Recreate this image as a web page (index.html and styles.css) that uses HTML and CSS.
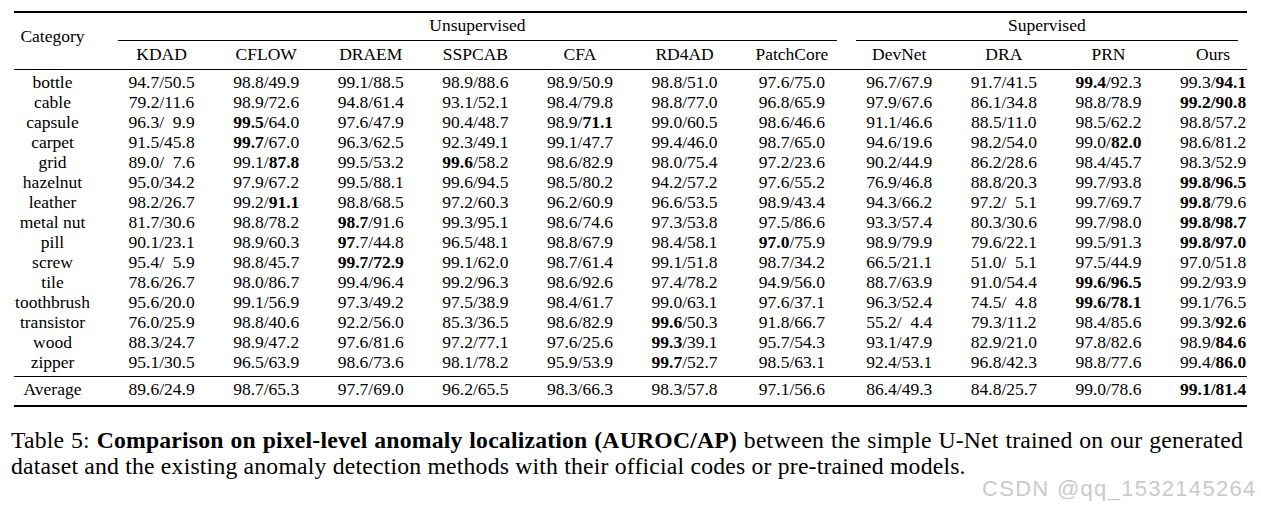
FILE: index.html
```html
<!DOCTYPE html>
<html>
<head>
<meta charset="utf-8">
<link rel="stylesheet" href="styles.css">
</head>
<body>
<table class="tbl">
<colgroup>
<col class="col-cat">
<col class="col-n"><col class="col-n"><col class="col-n"><col class="col-n"><col class="col-n"><col class="col-n">
<col class="col-pc">
<col class="col-n"><col class="col-n"><col class="col-n">
<col class="col-last">
</colgroup>
<thead>
<tr class="h1">
<th class="cat" rowspan="2">Category</th>
<th class="grp" colspan="7"><div class="grp-in grp-u">Unsupervised</div></th>
<th class="grp" colspan="4"><div class="grp-in grp-s">Supervised</div></th>
</tr>
<tr class="h2">
<th>KDAD</th><th>CFLOW</th><th>DRAEM</th><th>SSPCAB</th><th>CFA</th><th>RD4AD</th><th>PatchCore</th><th>DevNet</th><th>DRA</th><th>PRN</th><th class="last">Ours</th>
</tr>
</thead>
<tbody>
<tr class="first"><td>bottle</td><td>94.7/50.5</td><td>98.8/49.9</td><td>99.1/88.5</td><td>98.9/88.6</td><td>98.9/50.9</td><td>98.8/51.0</td><td>97.6/75.0</td><td>96.7/67.9</td><td>91.7/41.5</td><td><b>99.4</b>/92.3</td><td>99.3/<b>94.1</b></td></tr>
<tr><td>cable</td><td>79.2/11.6</td><td>98.9/72.6</td><td>94.8/61.4</td><td>93.1/52.1</td><td>98.4/79.8</td><td>98.8/77.0</td><td>96.8/65.9</td><td>97.9/67.6</td><td>86.1/34.8</td><td>98.8/78.9</td><td><b>99.2/90.8</b></td></tr>
<tr><td>capsule</td><td>96.3/<span class="ph">0</span>9.9</td><td><b>99.5</b>/64.0</td><td>97.6/47.9</td><td>90.4/48.7</td><td>98.9/<b>71.1</b></td><td>99.0/60.5</td><td>98.6/46.6</td><td>91.1/46.6</td><td>88.5/11.0</td><td>98.5/62.2</td><td>98.8/57.2</td></tr>
<tr><td>carpet</td><td>91.5/45.8</td><td><b>99.7</b>/67.0</td><td>96.3/62.5</td><td>92.3/49.1</td><td>99.1/47.7</td><td>99.4/46.0</td><td>98.7/65.0</td><td>94.6/19.6</td><td>98.2/54.0</td><td>99.0/<b>82.0</b></td><td>98.6/81.2</td></tr>
<tr><td>grid</td><td>89.0/<span class="ph">0</span>7.6</td><td>99.1/<b>87.8</b></td><td>99.5/53.2</td><td><b>99.6</b>/58.2</td><td>98.6/82.9</td><td>98.0/75.4</td><td>97.2/23.6</td><td>90.2/44.9</td><td>86.2/28.6</td><td>98.4/45.7</td><td>98.3/52.9</td></tr>
<tr><td>hazelnut</td><td>95.0/34.2</td><td>97.9/67.2</td><td>99.5/88.1</td><td>99.6/94.5</td><td>98.5/80.2</td><td>94.2/57.2</td><td>97.6/55.2</td><td>76.9/46.8</td><td>88.8/20.3</td><td>99.7/93.8</td><td><b>99.8/96.5</b></td></tr>
<tr><td>leather</td><td>98.2/26.7</td><td>99.2/<b>91.1</b></td><td>98.8/68.5</td><td>97.2/60.3</td><td>96.2/60.9</td><td>96.6/53.5</td><td>98.9/43.4</td><td>94.3/66.2</td><td>97.2/<span class="ph">0</span>5.1</td><td>99.7/69.7</td><td><b>99.8</b>/79.6</td></tr>
<tr><td>metal nut</td><td>81.7/30.6</td><td>98.8/78.2</td><td><b>98.7</b>/91.6</td><td>99.3/95.1</td><td>98.6/74.6</td><td>97.3/53.8</td><td>97.5/86.6</td><td>93.3/57.4</td><td>80.3/30.6</td><td>99.7/98.0</td><td><b>99.8/98.7</b></td></tr>
<tr><td>pill</td><td>90.1/23.1</td><td>98.9/60.3</td><td><b>97</b>.7/44.8</td><td>96.5/48.1</td><td>98.8/67.9</td><td>98.4/58.1</td><td><b>97.0</b>/75.9</td><td>98.9/79.9</td><td>79.6/22.1</td><td>99.5/91.3</td><td><b>99.8/97.0</b></td></tr>
<tr><td>screw</td><td>95.4/<span class="ph">0</span>5.9</td><td>98.8/45.7</td><td><b>99.7/72.9</b></td><td>99.1/62.0</td><td>98.7/61.4</td><td>99.1/51.8</td><td>98.7/34.2</td><td>66.5/21.1</td><td>51.0/<span class="ph">0</span>5.1</td><td>97.5/44.9</td><td>97.0/51.8</td></tr>
<tr><td>tile</td><td>78.6/26.7</td><td>98.0/86.7</td><td>99.4/96.4</td><td>99.2/96.3</td><td>98.6/92.6</td><td>97.4/78.2</td><td>94.9/56.0</td><td>88.7/63.9</td><td>91.0/54.4</td><td><b>99.6/96.5</b></td><td>99.2/93.9</td></tr>
<tr><td>toothbrush</td><td>95.6/20.0</td><td>99.1/56.9</td><td>97.3/49.2</td><td>97.5/38.9</td><td>98.4/61.7</td><td>99.0/63.1</td><td>97.6/37.1</td><td>96.3/52.4</td><td>74.5/<span class="ph">0</span>4.8</td><td><b>99.6/78.1</b></td><td>99.1/76.5</td></tr>
<tr><td>transistor</td><td>76.0/25.9</td><td>98.8/40.6</td><td>92.2/56.0</td><td>85.3/36.5</td><td>98.6/82.9</td><td><b>99.6</b>/50.3</td><td>91.8/66.7</td><td>55.2/<span class="ph">0</span>4.4</td><td>79.3/11.2</td><td>98.4/85.6</td><td>99.3/<b>92.6</b></td></tr>
<tr><td>wood</td><td>88.3/24.7</td><td>98.9/47.2</td><td>97.6/81.6</td><td>97.2/77.1</td><td>97.6/25.6</td><td><b>99.3</b>/39.1</td><td>95.7/54.3</td><td>93.1/47.9</td><td>82.9/21.0</td><td>97.8/82.6</td><td>98.9/<b>84.6</b></td></tr>
<tr class="lastrow"><td>zipper</td><td>95.1/30.5</td><td>96.5/63.9</td><td>98.6/73.6</td><td>98.1/78.2</td><td>95.9/53.9</td><td><b>99.7</b>/52.7</td><td>98.5/63.1</td><td>92.4/53.1</td><td>96.8/42.3</td><td>98.8/77.6</td><td>99.4/<b>86.0</b></td></tr>
<tr class="avg"><td>Average</td><td>89.6/24.9</td><td>98.7/65.3</td><td>97.7/69.0</td><td>96.2/65.5</td><td>98.3/66.3</td><td>98.3/57.8</td><td>97.1/56.6</td><td>86.4/49.3</td><td>84.8/25.7</td><td>99.0/78.6</td><td><b>99.1/81.4</b></td></tr>
</tbody>
</table>
<p class="caption">Table 5: <b>Comparison on pixel-level anomaly localization (AUROC/AP)</b> between the simple U-Net trained on our generated dataset and the existing anomaly detection methods with their official codes or pre-trained models.</p>
<div class="watermark">CSDN @qq_1532145264</div>
</body>
</html>
```

FILE: styles.css
```css
html, body {
  margin: 0;
  padding: 0;
  background: #ffffff;
}
body {
  position: relative;
  width: 1261px;
  height: 511px;
  overflow: hidden;
  font-family: "Liberation Serif", "Times New Roman", serif;
  color: #000;
}
.tbl {
  margin: 11px 0 0 14px;
  width: 1233px;
  table-layout: fixed;
  border-collapse: separate;
  border-spacing: 0;
  border-top: 2px solid #000;
  border-bottom: 2px solid #000;
  font-size: 17.5px;
}
.col-cat { width: 95.3px; }
.col-n { width: 104.6px; }
.col-pc { width: 110.1px; }
.col-last { width: 86.4px; }
.tbl th, .tbl td {
  font-weight: normal;
  text-align: center;
  white-space: nowrap;
  padding: 0 18.3px;
  line-height: 20px;
}
.tbl td:first-child,
.tbl th.cat {
  padding-left: 0;
}
.tbl td:last-child,
.tbl th.last {
  padding-right: 0;
}
.tbl th.cat {
  vertical-align: top;
  padding-top: 13px;
  border-bottom: 1px solid #000;
}
.tbl th.grp {
  padding: 0;
}
.grp-in {
  padding: 2px 0 5px;
  border-bottom: 1px solid #000;
}
.grp-u {
  margin: 0 10px 0 8.5px;
}
.grp-s {
  margin: 0 9.5px 0 9px;
}
.h2 th {
  padding-top: 3px;
  padding-bottom: 5px;
  border-bottom: 1px solid #000;
}
.tbl td b {
  font-weight: bold;
}
.ph {
  visibility: hidden;
}
.first td {
  padding-top: 2px;
}
.lastrow td {
  padding-bottom: 4px;
  border-bottom: 1px solid #000;
}
.avg td {
  padding-top: 2px;
  padding-bottom: 6px;
}
.caption {
  margin: 20px 0 0 11px;
  width: 1232px;
  font-size: 23.7px;
  line-height: 26px;
  letter-spacing: 0.2px;
  text-align: justify;
}
.watermark {
  position: absolute;
  left: 982px;
  top: 478px;
  font-family: "Liberation Sans", Arial, sans-serif;
  font-size: 22px;
  line-height: 22px;
  letter-spacing: 1.3px;
  color: #cacaca;
  white-space: nowrap;
}
```
